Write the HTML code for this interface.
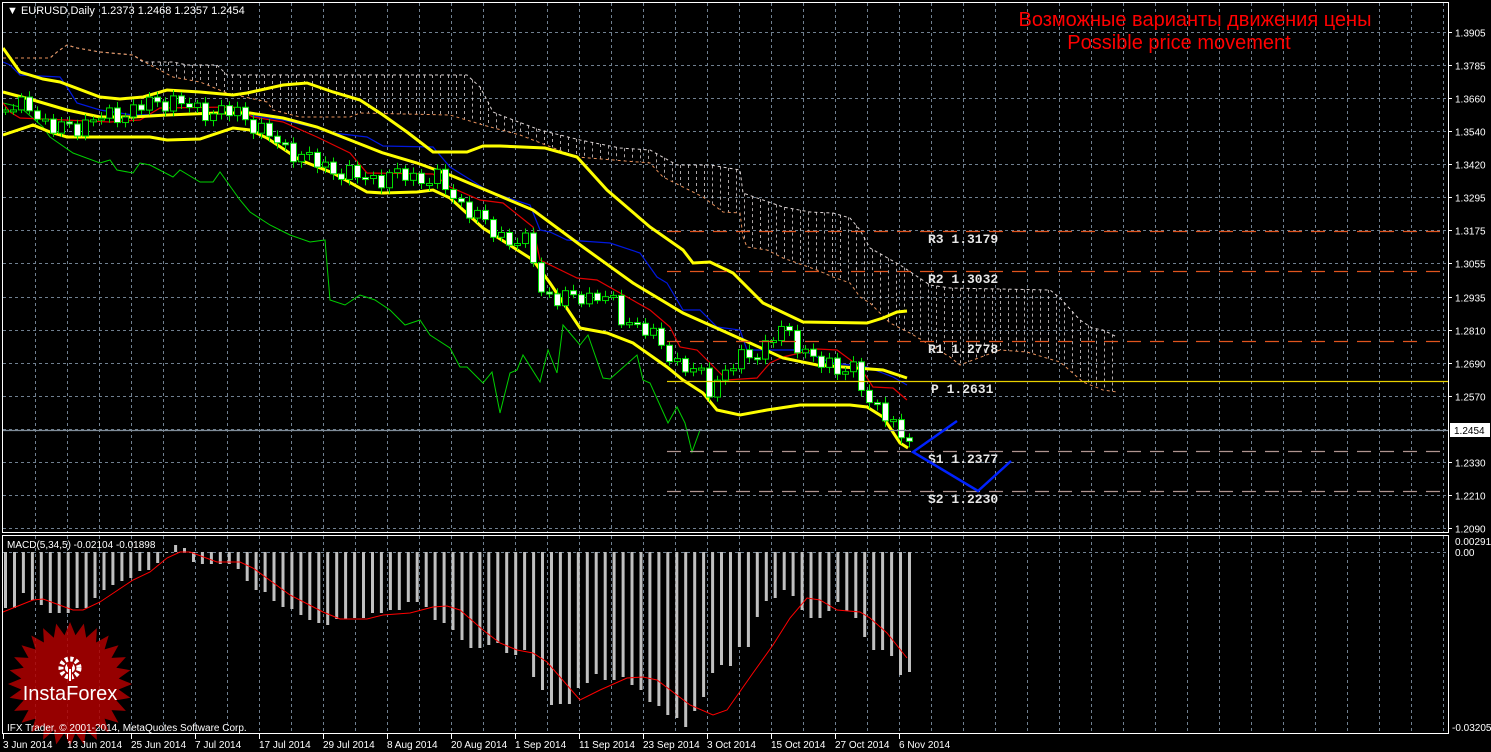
<!DOCTYPE html>
<html><head><meta charset="utf-8"><style>
html,body{margin:0;padding:0;background:#000;width:1491px;height:752px;overflow:hidden}
svg{display:block}
text{font-family:"Liberation Sans",sans-serif}
text.m{font-family:"Liberation Mono",monospace;font-weight:bold;font-size:13px}
</style></head><body>
<svg id="s" width="1491" height="752" xmlns="http://www.w3.org/2000/svg">
<rect width="1491" height="752" fill="#000"/>
<g id="grid"></g>
<g id="cloud"></g>
<g id="lvl"></g>
<g id="lines"></g>
<g id="cand"></g>
<g id="macd"></g>
<!-- logo -->
<g>
<polygon id="star" fill="#b00000" fill-opacity="0.85"/>
<g fill="#fff" transform="translate(70,668)">
<circle r="9" fill="none" stroke="#fff" stroke-width="5" stroke-dasharray="3 2.3"/>
<circle r="5" fill="#fff"/>
<circle cy="-3" r="3" fill="#b30000"/>
<rect x="-2" y="-1" width="4" height="14" fill="#b30000"/>
<rect x="-1" y="1" width="2" height="12" fill="#fff"/>
</g>
<text x="70" y="700" font-size="20" fill="#fff" text-anchor="middle">InstaForex</text>
</g>
<!-- borders -->
<rect x="2.5" y="2.5" width="1446" height="530" fill="none" stroke="#fff"/>
<rect x="2.5" y="535.5" width="1446" height="198" fill="none" stroke="#fff"/>
<g stroke-width="1.2">
<line x1="667" y1="231.5" x2="1448" y2="231.5" stroke="#e0551e" stroke-dasharray="14 9"/>
<line x1="667" y1="271.5" x2="1448" y2="271.5" stroke="#e0551e" stroke-dasharray="14 9"/>
<line x1="667" y1="341.5" x2="1448" y2="341.5" stroke="#e0551e" stroke-dasharray="14 9"/>
<line x1="667" y1="381.5" x2="1448" y2="381.5" stroke="#e8d000"/>
<line x1="667" y1="451.5" x2="1448" y2="451.5" stroke="#b09590" stroke-dasharray="14 9"/>
<line x1="667" y1="491.5" x2="1448" y2="491.5" stroke="#b09590" stroke-dasharray="14 9"/>
<line x1="3" y1="430.5" x2="1448" y2="430.5" stroke="#7f8c99"/>
</g>
<g fill="#e8e8e8">
<text class="m" x="928" y="243">R3 1.3179</text>
<text class="m" x="928" y="283">R2 1.3032</text>
<text class="m" x="928" y="353">R1 1.2778</text>
<text class="m" x="931" y="393">P 1.2631</text>
<text class="m" x="928" y="463">S1 1.2377</text>
<text class="m" x="928" y="503">S2 1.2230</text>
</g>
<polyline points="957,421 913,452 978,491 1011,461" fill="none" stroke="#0022ff" stroke-width="2.5"/>
<text x="7" y="14" font-size="11" fill="#fff">▼ EURUSD,Daily&#160;&#160;1.2373 1.2468 1.2357 1.2454</text>
<text x="1195" y="26" font-size="20" fill="#ff0000" text-anchor="middle">Возможные варианты движения цены</text>
<text x="1179" y="49" font-size="20" fill="#ff0000" text-anchor="middle">Possible price movement</text>
<text x="7" y="548" font-size="10" fill="#fff">MACD(5,34,5) -0.02104 -0.01898</text>
<text x="7" y="731" font-size="10" fill="#fff">IFX Trader, © 2001-2014, MetaQuotes Software Corp.</text>
<g id="axis" font-size="10" fill="#fff"></g>
<rect x="1450" y="423" width="40" height="14" fill="#fff"/>
<text x="1454" y="434" font-size="10" fill="#000">1.2454</text>
</svg>
<script>
(function(){
var NS="http://www.w3.org/2000/svg";
function el(p,t,a,txt){var e=document.createElementNS(NS,t);for(var k in a)e.setAttribute(k,a[k]);if(txt!=null)e.textContent=txt;document.getElementById(p).appendChild(e);return e;}
function pl(p,pts,c,w,da){var s=pts.map(function(q){return q[0]+","+q[1]}).join(" ");var a={points:s,fill:"none",stroke:c,"stroke-width":w};if(da)a["stroke-dasharray"]=da;return el(p,"polyline",a);}
function interp(pts,x){for(var i=0;i<pts.length-1;i++){if(x>=pts[i][0]&&x<=pts[i+1][0]){var t=(x-pts[i][0])/(pts[i+1][0]-pts[i][0]||1);return pts[i][1]+t*(pts[i+1][1]-pts[i][1]);}}return x<pts[0][0]?pts[0][1]:pts[pts.length-1][1];}
var GC="#708090";
var gy=[];for(var i=0;i<16;i++)gy.push(Math.round(32+33.07*i)+0.5);
gy.forEach(function(y){el("grid","line",{x1:3,x2:1448,y1:y,y2:y,stroke:GC,"stroke-dasharray":"3 3"});});
el("grid","line",{x1:3,x2:1448,y1:552.5,y2:552.5,stroke:GC,"stroke-dasharray":"3 3"});
for(var x=35;x<1448;x+=32){el("grid","line",{x1:x+.5,x2:x+.5,y1:3,y2:532,stroke:GC,"stroke-dasharray":"3 3"});el("grid","line",{x1:x+.5,x2:x+.5,y1:536,y2:733,stroke:GC,"stroke-dasharray":"3 3"});}
var labs=["1.3905","1.3785","1.3660","1.3540","1.3420","1.3295","1.3175","1.3055","1.2935","1.2810","1.2690","1.2570","","1.2330","1.2210","1.2090"];
labs.forEach(function(l,i){if(l){el("axis","text",{x:1455,y:gy[i]+4},l);el("axis","line",{x1:1448,x2:1452,y1:gy[i],y2:gy[i],stroke:"#fff"});}});
el("axis","text",{x:1455,y:545},"0.00291");el("axis","text",{x:1455,y:556},"0.00");el("axis","text",{x:1452,y:731},"-0.03205");
var dates=["3 Jun 2014","13 Jun 2014","25 Jun 2014","7 Jul 2014","17 Jul 2014","29 Jul 2014","8 Aug 2014","20 Aug 2014","1 Sep 2014","11 Sep 2014","23 Sep 2014","3 Oct 2014","15 Oct 2014","27 Oct 2014","6 Nov 2014"];
dates.forEach(function(d,i){var x=i==0?3:3+64*i;el("axis","text",{x:x,y:748},d);el("axis","line",{x1:x+.5,x2:x+.5,y1:734,y2:739,stroke:"#fff"});});
var spanB=[[3,58],[50,58],[57,52],[67,45],[77,48],[100,52],[133,55],[143,62],[173,62],[187,65],[217,65],[227,75],[467,75],[480,87],[487,100],[493,112],[500,115],[540,130],[580,140],[620,148],[650,150],[677,165],[710,165],[740,170],[743,193],[763,200],[783,207],[810,212],[833,213],[850,218],[860,230],[870,248],[900,265],[930,285],[950,288],[1050,290],[1060,298],[1080,320],[1092,328],[1103,330],[1117,337]];
var spanA=[[3,58],[50,58],[57,52],[67,45],[77,48],[100,52],[133,55],[150,65],[173,77],[200,82],[227,93],[267,102],[273,110],[300,117],[350,117],[360,113],[450,115],[483,125],[520,135],[577,157],[650,163],[663,177],[683,187],[703,197],[723,212],[740,213],[743,237],[747,247],[767,250],[783,258],[817,270],[833,277],[850,283],[860,297],[870,303],[890,323],[910,333],[930,345],[950,357],[960,365],[973,360],[1000,350],[1027,352],[1043,357],[1060,362],[1083,382],[1103,390],[1117,392]];
for(var x=8;x<=1117;x+=8){var a=interp(spanA,x),b=interp(spanB,x);if(Math.abs(a-b)>2)el("cloud","line",{x1:x+.5,x2:x+.5,y1:Math.min(a,b),y2:Math.max(a,b),stroke:"#d8d0d0","stroke-dasharray":"3 3","stroke-opacity":.8});}
pl("cloud",spanB,"#e0d8d8",1,"3 3");pl("cloud",spanA,"#e8905a",1,"3 3");
var green=[[3,103],[20,107],[43,127],[50,137],[73,153],[100,163],[110,160],[117,170],[133,173],[140,163],[150,165],[173,177],[180,170],[200,182],[213,182],[220,172],[240,200],[250,212],[270,225],[290,235],[310,242],[325,240],[330,300],[345,305],[360,295],[375,300],[390,310],[405,325],[420,320],[430,335],[450,348],[460,367],[467,367],[483,383],[492,372],[500,413],[510,373],[517,370],[523,355],[540,382],[548,350],[557,373],[563,325],[580,345],[588,335],[603,378],[610,379],[637,355],[643,380],[650,383],[668,423],[677,407],[685,423],[692,452],[700,430]];
pl("lines",green,"#00d000",1);
var blue=[[3,62],[10,65],[20,75],[60,77],[67,87],[77,103],[100,110],[133,115],[233,113],[283,120],[317,128],[333,133],[367,137],[383,146],[433,147],[450,167],[490,192],[530,205],[540,230],[550,232],[567,240],[610,243],[640,253],[657,277],[667,283],[683,310],[700,310],[717,327],[740,330],[747,350],[803,350],[817,357],[833,363],[867,367],[893,377],[907,385]];
pl("lines",blue,"#0018e0",1.2);
var red=[[3,103],[10,112],[20,118],[110,122],[140,120],[160,108],[233,107],[253,117],[283,122],[317,137],[350,153],[367,173],[433,174],[450,187],[480,200],[503,203],[533,227],[540,260],[577,278],[597,280],[650,310],[670,327],[680,347],[697,350],[707,360],[727,380],[757,378],[770,363],[783,357],[817,349],[837,350],[860,367],[873,387],[893,388],[907,400]];
pl("lines",red,"#e00000",1.2);
var yU=[[3,48],[20,72],[43,79],[60,82],[100,97],[120,99],[143,97],[167,90],[200,92],[233,95],[247,93],[283,85],[307,83],[333,92],[360,100],[383,115],[407,132],[433,152],[467,152],[483,146],[500,146],[545,148],[577,157],[607,190],[650,227],[683,250],[693,263],[710,262],[733,273],[763,303],[803,322],[867,323],[883,318],[897,312],[907,311]];
var yM=[[3,92],[33,100],[67,110],[100,117],[133,117],[167,115],[217,113],[250,113],[283,118],[317,127],[350,140],[383,153],[417,163],[450,175],[533,210],[583,247],[633,283],[683,313],[750,343],[783,358],[817,365],[883,370],[907,378]];
var yL=[[3,135],[33,125],[50,132],[67,137],[150,137],[167,140],[200,139],[233,128],[250,130],[267,138],[300,160],[333,173],[367,192],[383,193],[417,192],[433,190],[450,198],[483,228],[533,260],[550,283],[580,328],[607,333],[633,343],[667,367],[683,380],[703,393],[717,410],[740,415],[767,410],[800,405],[850,405],[867,407],[883,417],[900,443],[908,448]];
[yU,yM,yL].forEach(function(p){pl("lines",p,"#ffff00",3);});
var cl=[[5,110],[30,105],[50,130],[80,125],[100,118],[130,112],[150,103],[170,100],[190,108],[210,112],[240,113],[260,130],[280,145],[300,155],[320,165],[340,172],[360,178],[380,178],[400,175],[420,178],[440,180],[450,195],[470,210],[490,230],[510,240],[530,245],[540,290],[560,300],[580,297],[600,295],[610,300],[620,318],[640,325],[660,345],[680,365],[700,375],[710,390],[720,375],[740,360],[760,350],[780,330],[800,345],[820,365],[840,370],[850,360],[860,385],[870,410],[880,405],[890,415],[900,440],[908,440]];
var prev=interp(cl,0);
for(var i=0;i<114;i++){var x=5+8*i;var c=interp(cl,x)+7*Math.sin(i*2.3)+4*Math.sin(i*5.1);var o=prev;prev=c;var ty=Math.min(o,c),by=Math.max(o,c);if(by-ty<2){by=ty+2;}
var hi=ty-3-3*Math.abs(Math.sin(i*1.7)),lo=by+3+3*Math.abs(Math.sin(i*3.1));
el("cand","line",{x1:x+.5,x2:x+.5,y1:hi,y2:lo,stroke:"#00e000"});
el("cand","rect",{x:x-2.5,y:ty,width:6,height:by-ty,fill:(c>o?"#fff":"#000"),stroke:"#00e000"});}
var hb=[608,608,593,600,605,613,613,613,608,608,598,590,585,581,578,571,570,563,553,545,548,562,564,564,564,564,569,581,590,592,601,607,609,615,620,623,625,619,619,618,618,613,613,610,610,602,602,607,620,623,630,640,648,648,645,643,653,655,650,677,690,705,704,704,688,683,674,680,680,677,685,690,702,706,715,718,727,711,697,673,665,666,647,647,617,601,598,590,596,610,618,618,611,602,611,618,637,650,650,656,675,672];
var n=hb.length;
for(var i=0;i<n;i++){var x=4+i*(904/(n-1));var b=hb[i];var y1=Math.min(552,b),y2=Math.max(552,b);el("macd","rect",{x:x.toFixed(1),y:y1,width:3,height:Math.max(1,y2-y1),fill:"#c0c0c0"});}
var sig=[[3,612],[33,600],[43,599],[73,610],[83,610],[100,602],[133,580],[150,572],[167,558],[180,552],[190,552],[217,562],[240,562],[253,568],[290,595],[323,612],[340,619],[367,619],[383,615],[410,613],[433,607],[447,606],[460,610],[483,630],[500,643],[517,650],[533,653],[547,662],[580,700],[600,690],[627,678],[643,677],[657,680],[690,705],[713,715],[727,710],[753,673],[773,645],[790,618],[807,598],[820,600],[837,610],[860,612],[870,618],[887,633],[907,658]];
pl("macd",sig,"#ff0000",1);
var pts=[],N=28;for(var k=0;k<2*N;k++){var r=k%2?49:62;var an=Math.PI*k/N;pts.push((70+r*Math.cos(an)).toFixed(1)+","+(684+r*Math.sin(an)).toFixed(1));}
document.getElementById("star").setAttribute("points",pts.join(" "));
})();
</script>
</body></html>
